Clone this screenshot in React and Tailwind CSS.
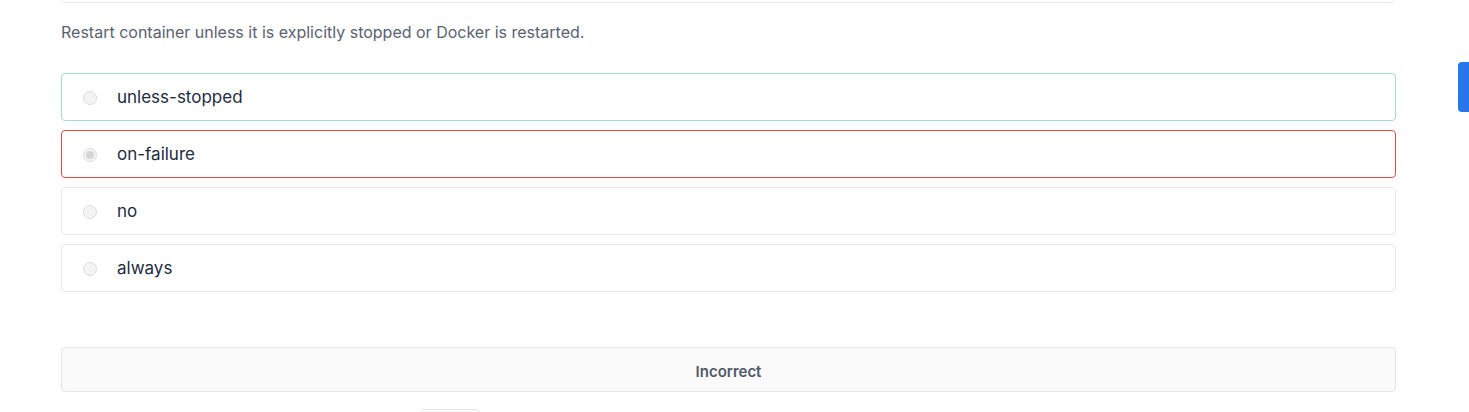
import React, { useState } from 'react';

const options = [
  { id: 'unless-stopped', state: 'hover' },
  { id: 'on-failure', state: 'wrong' },
  { id: 'no', state: 'idle' },
  { id: 'always', state: 'idle' },
];

const borderFor = {
  hover: 'border-[#a6dcc8]',
  wrong: 'border-[#e5484d]',
  idle: 'border-[#e6e6e6]',
};

const App = () => {
  const [selected] = useState('on-failure');

  return (
    <div className="relative h-[412px] w-full overflow-hidden bg-white font-['Inter',sans-serif]">
      <div className="mx-[61px] w-[1335px]">
        {/* tail of the previous card */}
        <div className="-mt-[40px] h-[43px] rounded-md border border-[#e6e6e6]"></div>

        <p className="mt-[17px] text-[16px] leading-6 text-[#5a6270]">
          Restart container unless it is explicitly stopped or Docker is restarted.
        </p>

        <div className="mt-[29px] flex flex-col gap-[9px]">
          {options.map((opt) => (
            <label
              key={opt.id}
              className={`flex h-[48px] items-center rounded border ${borderFor[opt.state]} bg-white pl-[21px] pt-[2px]`}
            >
              <span className="flex h-[14px] w-[14px] items-center justify-center rounded-full border border-[#dcdcdc] bg-[#f4f4f4]">
                {selected === opt.id && (
                  <span className="h-[8px] w-[8px] rounded-full bg-[#d6d6d6]"></span>
                )}
              </span>
              <span className="ml-[20px] text-[17px] text-[#1c2b3f]">{opt.id}</span>
            </label>
          ))}
        </div>

        <div className="mt-[55px] flex h-[45px] items-center justify-center rounded border border-[#e6e6e6] bg-[#fafafa] pt-[6px]">
          <span className="text-[15px] font-semibold text-[#4f5968]">Incorrect</span>
        </div>

        <div className="ml-[359px] mt-[17px] h-[10px] w-[60px] rounded-t border border-[#e4e4ea] bg-white"></div>
      </div>

      {/* feedback tab on the right edge */}
      <div className="absolute right-0 top-[62px] h-[50px] w-[11px] rounded-l bg-[#2776ea]"></div>
    </div>
  );
};

export default App;
